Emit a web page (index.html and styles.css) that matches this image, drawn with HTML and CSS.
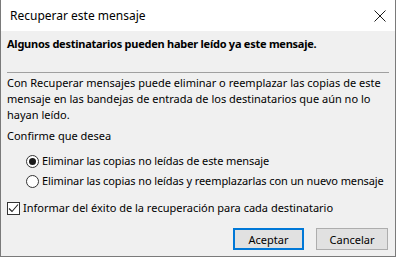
FILE: index.html
```html
<!DOCTYPE html>
<html lang="es">
<head>
  <meta charset="UTF-8" />
  <title>Recuperar este mensaje</title>
  <link rel="stylesheet" href="styles.css">
</head>
<body>
  <div class="dialog">
    <div class="titlebar">
      <span class="title">Recuperar este mensaje</span>
      <svg class="close" width="12" height="12" viewBox="0 0 12 12">
        <path d="M0.5 0.5 L11.5 11.5 M11.5 0.5 L0.5 11.5" stroke="#1a1a1a" stroke-width="1" fill="none" />
      </svg>
    </div>
    <div class="content">
      <p class="warning">Algunos destinatarios pueden haber leído ya este mensaje.</p>
      <hr class="sep">
      <p class="info">Con Recuperar mensajes puede eliminar o reemplazar las copias de este mensaje en las bandejas de entrada de los destinatarios que aún no lo hayan leído.</p>
      <p class="ask">Confirme que desea</p>
      <div class="options">
        <label class="option"><span class="radio checked"></span>Eliminar las copias no leídas de este mensaje</label>
        <label class="option"><span class="radio"></span>Eliminar las copias no leídas y reemplazarlas con un nuevo mensaje</label>
      </div>
      <label class="check">
        <span class="box">
          <svg width="11" height="11" viewBox="0 0 11 11">
            <path d="M1 5.5 L4 8.5 L10 1.5" stroke="#222" stroke-width="1.1" fill="none" />
          </svg>
        </span>Informar del éxito de la recuperación para cada destinatario</label>
      <div class="actions">
        <button class="btn default">Aceptar</button>
        <button class="btn">Cancelar</button>
      </div>
    </div>
  </div>
</body>
</html>
```

FILE: styles.css
```css
body {
  margin: 0;
  font-family: "Noto Sans", sans-serif;
  font-size: 11px;
  color: #000;
  background: #fff;
}
.dialog {
  width: 396px;
  height: 257px;
  box-sizing: border-box;
  border: 1px solid #7a7a7a;
  border-top: none;
  display: flex;
  flex-direction: column;
  overflow: hidden;
}
.titlebar {
  height: 31px;
  background: #fff;
  display: flex;
  align-items: center;
  justify-content: space-between;
  padding: 0 9px 0 9px;
  flex-shrink: 0;
}
.title {
  font-size: 12px;
  color: #000;
}
.content {
  flex: 1;
  background: #f0f0f0;
  padding: 0 6px;
}
p {
  margin: 0;
}
.warning {
  font-weight: bold;
  margin-top: 5px;
  line-height: 16px;
  letter-spacing: -0.25px;
}
.sep {
  border: none;
  border-top: 1px solid #a0a0a0;
  margin: 20px 0 0 0;
}
.info {
  margin-top: 2px;
  line-height: 16px;
  padding-right: 4px;
}
.ask {
  margin-top: 5px;
  line-height: 16px;
}
.options {
  margin-top: 9px;
  padding-left: 19px;
  display: flex;
  flex-direction: column;
  gap: 4px;
  white-space: nowrap;
  letter-spacing: -0.1px;
}
.option, .check {
  display: flex;
  align-items: center;
  line-height: 16px;
}
.radio {
  width: 11px;
  height: 11px;
  border: 1px solid #333;
  border-radius: 50%;
  background: #fff;
  margin-right: 3px;
  display: flex;
  align-items: center;
  justify-content: center;
}
.radio.checked::after {
  content: "";
  width: 7px;
  height: 7px;
  border-radius: 50%;
  background: #1a1a1a;
}
.check {
  margin-top: 11px;
}
.box {
  width: 11px;
  height: 11px;
  border: 1px solid #333;
  background: #fff;
  margin-right: 3px;
  display: flex;
  align-items: center;
  justify-content: center;
}
.actions {
  display: flex;
  justify-content: flex-end;
  gap: 12px;
  margin-top: 12px;
  padding-right: 1px;
}
.btn {
  width: 72px;
  height: 22px;
  font-family: "Noto Sans", sans-serif;
  font-size: 11px;
  background: #e1e1e1;
  border: 1px solid #adadad;
  padding: 0;
  color: #000;
}
.btn.default {
  border: 2px solid #0078d7;
  width: 71px;
}
```
